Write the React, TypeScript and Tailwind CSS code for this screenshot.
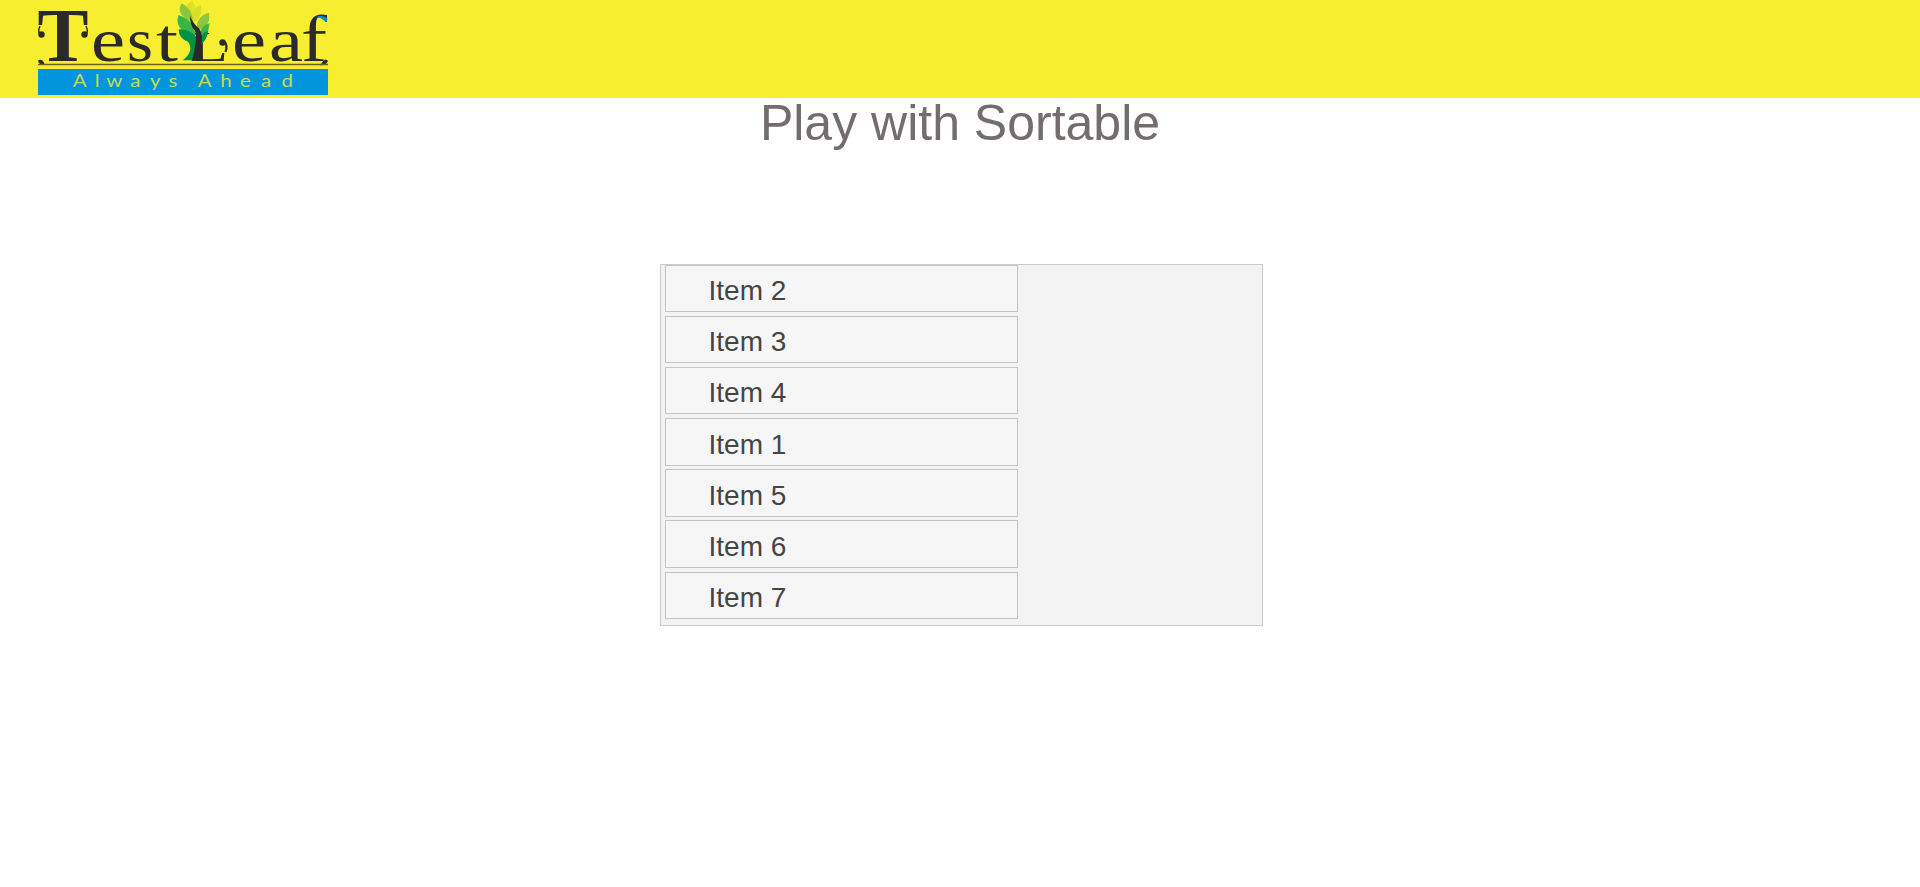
const items = [
  { label: "Item 2", cls: "h-[47px] pt-[1px] mb-[4px]" },
  { label: "Item 3", cls: "h-[47px] pt-[1px] mb-[4px]" },
  { label: "Item 4", cls: "h-[47px] pt-[1px] mb-[4px]" },
  { label: "Item 1", cls: "h-[48px] pt-[2px] mb-[3px]" },
  { label: "Item 5", cls: "h-[48px] pt-[2px] mb-[3px]" },
  { label: "Item 6", cls: "h-[48px] pt-[2px] mb-[4px]" },
  { label: "Item 7", cls: "h-[47px] pt-[1px]" },
];

function Logo() {
  const ink = "#2b2a29";
  return (
    <svg width="290" height="98" viewBox="38 0 290 98" className="block overflow-visible">
      <g fill={ink} fontFamily="'Liberation Serif', serif">
        <text x="37.5" y="60.5" fontSize="76" fontWeight="700" textLength="51" lengthAdjust="spacingAndGlyphs">T</text>
        <text x="91" y="60.5" fontSize="61" textLength="34" lengthAdjust="spacingAndGlyphs">e</text>
        <text x="127" y="60.5" fontSize="61" textLength="26" lengthAdjust="spacingAndGlyphs">s</text>
        <text x="156" y="60.5" fontSize="61" textLength="22" lengthAdjust="spacingAndGlyphs">t</text>
        <text x="190" y="60.5" fontSize="42" textLength="38" lengthAdjust="spacingAndGlyphs">L</text>
        <text x="232" y="60.5" fontSize="61" textLength="34" lengthAdjust="spacingAndGlyphs">e</text>
        <text x="269" y="60.5" fontSize="61" textLength="34" lengthAdjust="spacingAndGlyphs">a</text>
        <text x="301" y="60.5" fontSize="65" textLength="26" lengthAdjust="spacingAndGlyphs">f</text>
      </g>
      {/* Ornaments around the lettering */}
      <g fill={ink}>
        <circle cx="41.500" cy="34.500" r="3.200" />
        <circle cx="84.500" cy="34.500" r="3.200" />
        <circle cx="222.500" cy="42.500" r="3.200" />
        <path d="M38 61Q39 59 42 60Q44 62 45 65Q39 65 38 61Z" />
        <path d="M328 61Q326 58 323 61Q322 64 319 65Q326 66 328 61Z" />
      </g>
      <g fill="none" stroke={ink} strokeWidth="1.400">
        <path d="M40 26Q37 32 41 36" />
        <path d="M86 26Q89 32 85 36" />
        <path d="M224 41Q228 45 225.500 52" strokeWidth="2.200" />
      </g>
      <path d="M316 17Q321 15 326 17.500Q328 18.500 327.500 20Q326 22 323 20Q321 17.500 316 17Z" fill="#078bea" />
      {/* Tree */}
      <g transform="translate(170 0) scale(.33333)">
        <path d="M66 2Q39 20 46 36Q56 51 66 57Q88 32 66 2Z" fill="#dfe127" />
        <path d="M93 14Q57 28 72 69Q99 48 93 14Z" fill="#d5df27" />
        <path d="M35 10Q18 35 45 54L70 68Q67 25 35 10Z" fill="#8cc63f" />
        <path d="M117 38Q78 48 79 91Q123 84 117 38Z" fill="#8cc63f" />
        <path d="M25 45Q17 75 37 91L76 107Q74 60 25 45Z" fill="#39b54a" />
        <path d="M119 70Q84 78 87 128Q114 112 119 70Z" fill="#39b54a" />
        <path d="M26 88Q25 115 54 125Q74 152 38 181H78L92 135Q111 119 115 92Q88 101 88 127Q72 88 26 88Z" fill="#009245" />
        <path d="M60 47Q60 77 74 91Q81 105 76 132Q74 157 66 181H96Q86 165 92 143Q102 106 87 85Q70 72 60 47Z" fill={ink} />
      </g>
      <path d="M38 64.500H328" stroke="#69631f" strokeWidth="1.400" />
      <rect x="38" y="69" width="290" height="26" fill="#0295dd" />
      <text
        transform="scale(1.2 1)"
        x="60.7 79 88.500 108.500 125 140.500 164.800 183.500 200 217.500 234.500"
        y="87"
        fontSize="17"
        fill="#c5dc52"
        fontFamily="Lato, sans-serif"
      >
        AlwaysAhead
      </text>
    </svg>
  );
}

export default function App() {
  return (
    <div className="h-[887px] bg-white font-['Liberation_Sans',Arial,sans-serif]">
      <header className="h-[98px] bg-[#f8ee30] pl-[38px]">
        <Logo />
      </header>
      <h1 className="h-[166px] text-center text-[50px] leading-[50px] text-[#746d6e]">Play with Sortable</h1>
      <ul className="ml-[660px] h-[362px] w-[603px] border border-[#cbcbcb] bg-[#f3f3f3] pl-[4px]">
        {items.map((i) => (
          <li key={i.label} className={`w-[353px] border border-[#c5c5c5] bg-[#f6f6f6] pl-[42.5px] text-[28px] leading-[48px] text-[#454545] ${i.cls}`}>
            {i.label}
          </li>
        ))}
      </ul>
    </div>
  );
}
